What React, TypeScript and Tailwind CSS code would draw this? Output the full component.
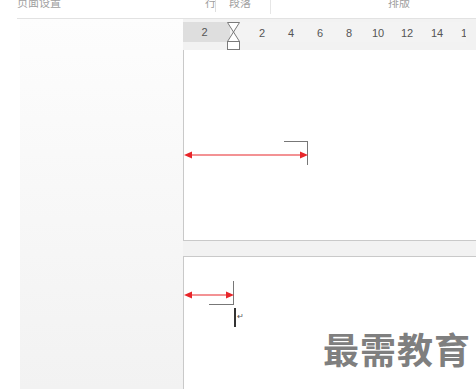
import React from "react";

const ticks = [
  { x: 262, t: "2" },
  { x: 291, t: "4" },
  { x: 320, t: "6" },
  { x: 349, t: "8" },
  { x: 378, t: "10" },
  { x: 407, t: "12" },
  { x: 437, t: "14" },
  { x: 467, t: "16" },
];

/** Double-headed red arrow. */
function RedArrow({ width }: { width: number }) {
  return (
    <svg width={width} height="10" viewBox={`0 0 ${width} 10`} className="block">
      <line x1="4" y1="5" x2={width - 4} y2="5" stroke="#e8262a" strokeWidth="1.2" />
      <polygon points={`0,5 8,1.5 8,8.5`} fill="#e8262a" />
      <polygon points={`${width},5 ${width - 8},1.5 ${width - 8},8.5`} fill="#e8262a" />
    </svg>
  );
}

export default function App() {
  return (
    <div
      className="w-[476px] h-[389px] overflow-hidden bg-[#f2f2f2] flex flex-col"
      style={{ fontFamily: '"Liberation Sans", "Noto Sans CJK SC", sans-serif' }}
    >
      {/* ribbon remnant */}
      <div className="h-[19px] bg-white flex shrink-0">
        <div className="w-[17px]" />
        <div className="flex-1 relative border-b border-[#e2e2e2] overflow-hidden text-[11px] text-[#a0a0a0] leading-none">
          <span className="absolute left-0 -top-[2px]">页面设置</span>
          <span className="absolute left-[188px] -top-[2px]">行</span>
          <span className="absolute left-[198px] top-0 h-[12px] border-l border-[#dedede]" />
          <span className="absolute left-[212px] -top-[2px]">段落</span>
          <span className="absolute left-[253px] top-0 h-[14px] border-l border-[#e6e6e6]" />
          <span className="absolute left-[371px] -top-[2px]">排版</span>
        </div>
      </div>

      <div className="flex flex-1 min-h-0">
        {/* left gutter */}
        <div className="w-[183px] shrink-0 flex">
          <div className="w-[20px] bg-white" />
          <div className="flex-1 bg-gradient-to-b from-[#fdfdfd] to-[#f2f2f2]" />
        </div>

        <div className="flex-1 flex flex-col">
          {/* ruler */}
          <div className="relative mt-[3px] h-[20px] w-[283px] overflow-hidden flex text-[11px] text-[#555] shrink-0">
            <div className="w-[47px] bg-[#dedede] flex items-center justify-center pr-[4px]">2</div>
            <div className="flex-1 bg-[#f3f3f3]" />
            {ticks.map(tk => (
              <span key={tk.t} className="absolute top-[3px] -translate-x-1/2" style={{ left: tk.x - 183 }}>
                {tk.t}
              </span>
            ))}
          </div>

          {/* page 1 */}
          <div className="relative mt-[8px] h-[191px] bg-white border-l border-b border-[#c9c9c9] shrink-0 flex flex-col">
            {/* indent marker, hanging over from the ruler */}
            <svg className="absolute left-[43px] -top-[28px]" width="13" height="29" viewBox="0 0 13 29">
              <polygon points="0.5,0.5 12.5,0.5 6.5,10" fill="#fff" stroke="#7a7a7a" />
              <polygon points="6.5,10 12.5,19.5 0.5,19.5" fill="#fff" stroke="#7a7a7a" />
              <rect x="0.5" y="19.5" width="12" height="8" fill="#fff" stroke="#7a7a7a" />
            </svg>
            <div className="ml-[100px] mt-[91px] w-[24px] h-[24px] border-t border-r border-[#777]" />
            <div className="-mt-[15px]">
              <RedArrow width={124} />
            </div>
          </div>

          {/* page 2 */}
          <div className="mt-[15px] flex-1 bg-white border-l border-t border-[#c9c9c9] relative">
            <div className="ml-[25px] mt-[24px] w-[25px] h-[24px] border-b border-r border-[#777]" />
            <div className="-mt-[15px]">
              <RedArrow width={50} />
            </div>
            <div className="ml-[50px] mt-[8px] flex items-start">
              <div className="w-[2px] h-[19px] bg-[#333]" />
              <span className="text-[8px] text-[#555] leading-none mt-[5px] ml-[1px]">↵</span>
            </div>
            {/* watermark */}
            <div className="absolute left-[139px] top-[73px] text-[36px] font-bold text-[#7f7f7f] leading-none tracking-[1px]"
              style={{ fontFamily: '"Noto Sans CJK SC", sans-serif' }}>
              最需教育
            </div>
          </div>
        </div>
      </div>
    </div>
  );
}
